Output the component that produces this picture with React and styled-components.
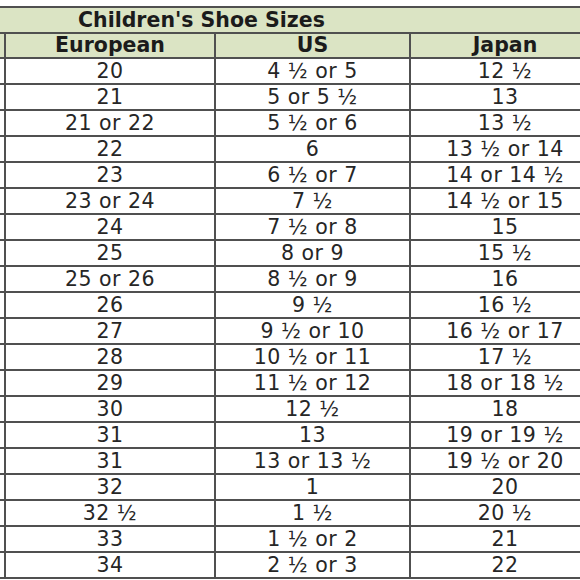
import React from 'react';
import styled, { createGlobalStyle } from 'styled-components';

const GlobalStyle = createGlobalStyle`
  html, body {
    margin: 0;
    padding: 0;
    background: #fff;
  }
`;

const Page = styled.div`
  width: 580px;
  height: 580px;
  overflow: hidden;
  background: #fff;
  padding-top: 6px;
  box-sizing: border-box;
`;

const Table = styled.table`
  width: 600px;
  table-layout: fixed;
  border-collapse: collapse;
  font-family: 'DejaVu Sans', Verdana, sans-serif;
  color: #262626;

  td, th {
    border: 2px solid #505050;
    padding: 0;
    text-align: center;
    white-space: nowrap;
  }

  tr > :first-child {
    border-left: none;
  }
`;

const TitleCell = styled.th`
  height: 24px;
  line-height: 21px;
  background: #dbe4c4;
  text-align: left !important;
  padding-left: 78px !important;
  font-size: 20.5px;
  font-weight: bold;
  color: #1b1b1b;
  border-left: none !important;
`;

const HeadCell = styled.th`
  height: 23px;
  line-height: 21px;
  background: #dbe4c4;
  font-size: 20.5px;
  font-weight: bold;
  color: #1b1b1b;
`;

const Cell = styled.td`
  height: 24px;
  font-size: 20.5px;
  letter-spacing: 0.5px;
  line-height: 22px;
`;

const rows = [
  ['20', '4 ½ or 5', '12 ½'],
  ['21', '5 or 5 ½', '13'],
  ['21 or 22', '5 ½ or 6', '13 ½'],
  ['22', '6', '13 ½ or 14'],
  ['23', '6 ½ or 7', '14 or 14 ½'],
  ['23 or 24', '7 ½', '14 ½ or 15'],
  ['24', '7 ½ or 8', '15'],
  ['25', '8 or 9', '15 ½'],
  ['25 or 26', '8 ½ or 9', '16'],
  ['26', '9 ½', '16 ½'],
  ['27', '9 ½ or 10', '16 ½ or 17'],
  ['28', '10 ½ or 11', '17 ½'],
  ['29', '11 ½ or 12', '18 or 18 ½'],
  ['30', '12 ½', '18'],
  ['31', '13', '19 or 19 ½'],
  ['31', '13 or 13 ½', '19 ½ or 20'],
  ['32', '1', '20'],
  ['32 ½', '1 ½', '20 ½'],
  ['33', '1 ½ or 2', '21'],
  ['34', '2 ½ or 3', '22'],
];

const App = () => {
  return (
    <Page>
      <GlobalStyle />
      <Table>
        <colgroup>
          <col style={{ width: 5 }} />
          <col style={{ width: 210 }} />
          <col style={{ width: 195 }} />
          <col style={{ width: 190 }} />
        </colgroup>
        <thead>
          <tr>
            <TitleCell colSpan={4}>Children's Shoe Sizes</TitleCell>
          </tr>
          <tr>
            <HeadCell />
            <HeadCell>European</HeadCell>
            <HeadCell>US</HeadCell>
            <HeadCell>Japan</HeadCell>
          </tr>
        </thead>
        <tbody>
          {rows.map((r, i) => (
            <tr key={i}>
              <Cell />
              <Cell>{r[0]}</Cell>
              <Cell>{r[1]}</Cell>
              <Cell>{r[2]}</Cell>
            </tr>
          ))}
        </tbody>
      </Table>
    </Page>
  );
};

export default App;
